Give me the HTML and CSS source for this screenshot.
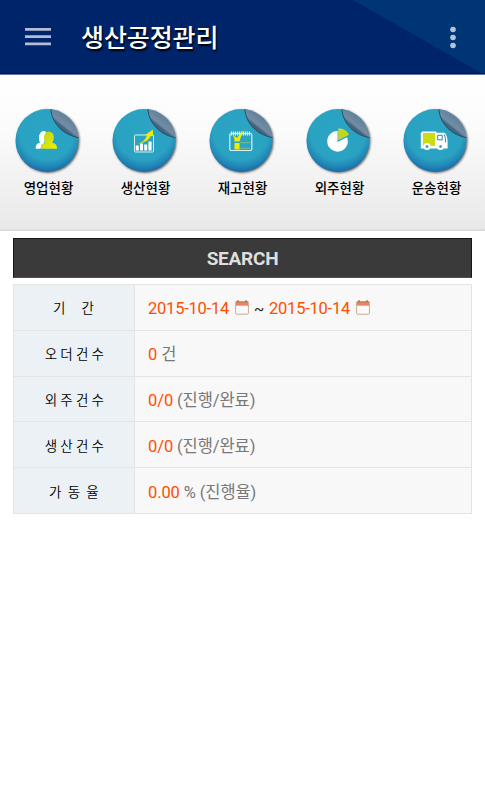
FILE: index.html
```html
<!DOCTYPE html>
<html lang="ko">
<head>
<meta charset="utf-8">
<title>생산공정관리</title>
<link rel="stylesheet" href="styles.css">
</head>
<body>
<svg class="defs" aria-hidden="true">
  <defs>
    <radialGradient id="disc" gradientUnits="userSpaceOnUse" cx="47" cy="29" r="42">
      <stop offset="0" stop-color="#2ba5c3"/><stop offset=".66" stop-color="#2aa2c2"/><stop offset=".82" stop-color="#2288b7"/><stop offset="1" stop-color="#1260a2"/>
    </radialGradient>
    <linearGradient id="fold" gradientUnits="userSpaceOnUse" x1="56" y1="32" x2="72" y2="12">
      <stop offset="0" stop-color="#34566f"/><stop offset=".4" stop-color="#42657f"/><stop offset=".5" stop-color="#748da4"/><stop offset="1" stop-color="#577a96"/>
    </linearGradient>
    <linearGradient id="lime" x1="0" y1="0" x2="1" y2="1"><stop offset="0" stop-color="#b9d51b"/><stop offset="1" stop-color="#f0f000"/></linearGradient>
    <symbol id="button" viewBox="0 0 97 75">
      <circle cx="47" cy="37.500" r="31.500" fill="url(#disc)"/>
      <path d="M50.700 6.200A31.500 31.500 0 0 1 78.500 34.700C64 32 52.500 22 50.700 6.200Z" fill="url(#fold)"/>
      <path d="M50.700 6.200C52.500 22 64 32 78.500 34.700" fill="none" stroke="#27506c" stroke-width="1"/>
    </symbol>
  </defs>
</svg>
<header class="bar">
  <svg class="menu" viewBox="0 0 26 18"><path d="M0 1.400h26M0 8.600h26M0 15.800h26"/></svg>
  <h1>생산공정관리</h1>
  <svg class="more" viewBox="0 0 6 24"><circle cx="3" cy="3.500" r="2.800"/><circle cx="3" cy="11.500" r="2.800"/><circle cx="3" cy="19.500" r="2.800"/></svg>
</header>
<nav class="tabs">
  <a class="tab"><svg class="icon" viewBox="0 0 97 75"><use href="#button" class="disc"/>
    <path fill="#fff" d="M35.700 45.800c0-4.300 1.600-5.400 4.500-6.300-1.400-2-1.800-6.500 0-9.300 1.500-2.500 4.400-2.600 6-1.200l-2 11-2.800 2-.8 3.800z"/>
    <path fill="url(#lime)" d="M41 45.800c.1-4.100 1.300-5.100 4.600-6.300-2.700-2.800-2.500-10.700 3.300-10.700s6 7.800 3.200 10.700c3.500 1.200 4.800 2.200 5 6.300z"/></svg>
    <span>영업현황</span></a>
  <a class="tab"><svg class="icon" viewBox="0 0 97 75"><use href="#button" class="disc"/>
    <rect x="37.500" y="32" width="19" height="17" rx="1" fill="none" stroke="#d8eef5" stroke-width="1"/>
    <path fill="#fff" d="M38.800 42.500h3v5h-3zM43 40.400h3v7.100h-3zM47.200 41.500h3v6h-3zM51.400 38.500h3.200v9h-3.200z"/>
    <path fill="#f0eb00" d="M41.300 40.500c4.500-1.200 7.500-4 8.700-8.300h-2.200l8-5.700.4 6.600-2.400-.2c-2 4.100-6 6.600-12.500 7.600z"/></svg>
    <span>생산현황</span></a>
  <a class="tab"><svg class="icon" viewBox="0 0 97 75"><use href="#button" class="disc"/>
    <rect x="35.800" y="30.500" width="22" height="17" rx="1.200" fill="none" stroke="#d9f0f6" stroke-width="1.200"/>
    <path stroke="#e5f5f8" stroke-width="1.200" d="M37.500 28.500v4M39.500 28.500v4M41.500 28.500v4M43.500 28.500v4M45.500 28.500v4M47.500 28.500v4M49.500 28.500v4M51.500 28.500v4M53.500 28.500v4M55.500 28.500v4"/>
    <path fill="none" stroke="#87bf75" d="M46 39.700h10M46 45.300h10"/>
    <path fill="#eeec00" d="M40.500 40h5.100v6.500h-5.100zM38.500 31.500l4.500 3.400c2.500-3.500 4.500-5.800 7.700-8-2.300 3.300-4 6.300-5.100 11.600h-5.100c0-2.600-.5-4.800-2-7z"/></svg>
    <span>재고현황</span></a>
  <a class="tab"><svg class="icon" viewBox="0 0 97 75"><use href="#button" class="disc"/>
    <path fill="#fff" d="M46.600 28A10.300 10.300 0 1 0 56 34.300L46.600 39z"/>
    <path fill="#c4d716" stroke="#e5e942" stroke-width=".6" d="M47.700 25.800v10.800l9.800-5.100c-2-3.700-5.800-5.700-9.800-5.700z"/></svg>
    <span>외주현황</span></a>
  <a class="tab"><svg class="icon" viewBox="0 0 97 75"><use href="#button" class="disc"/>
    <path fill="#fff" d="M34.300 28.500h14v1.300h8.300c2 2.300 3 5.300 3 8.500v7.200H32.800V30z"/>
    <path fill="#cbdc13" d="M35 30h12v13H35z"/>
    <path fill="none" stroke="#2688aa" d="M49.700 32.300h4.500v4.500h-4.500zM56 31.500c1.300 2.500 1.700 5 1.700 8"/>
    <circle cx="39" cy="43.500" r="3.600" fill="#fff"/><circle cx="52.500" cy="43.500" r="3.600" fill="#fff"/><circle cx="39" cy="43.500" r="1.300" fill="#258eaf"/><circle cx="52.500" cy="43.500" r="1.300" fill="#258eaf"/></svg>
    <span>운송현황</span></a>
</nav>
<main>
  <div class="search">SEARCH</div>
  <table>
    <tr class="dates"><th>기<i></i>간</th><td><b class="date">2015-10-14</b><svg class="cal" viewBox="0 0 14 15"><rect x=".6" y="1.600" width="12.800" height="12.600" rx="1" fill="#fafafa" stroke="#c9ac8b"/><path fill="#ef8063" d="M1 2h12v3.700H1z"/><path stroke="#b98452" d="M.6 2h12.800"/><path stroke="#8d5a43" d="M3 0v2M11 0v2"/></svg><span class="tilde">~</span><b class="date">2015-10-14</b><svg class="cal" viewBox="0 0 14 15"><rect x=".6" y="1.600" width="12.800" height="12.600" rx="1" fill="#fafafa" stroke="#c9ac8b"/><path fill="#ef8063" d="M1 2h12v3.700H1z"/><path stroke="#b98452" d="M.6 2h12.800"/><path stroke="#8d5a43" d="M3 0v2M11 0v2"/></svg></td></tr>
    <tr><th>오더건수</th><td class="orders"><b>0</b> 건</td></tr>
    <tr><th>외주건수</th><td><b>0/0</b> (진행/완료)</td></tr>
    <tr><th>생산건수</th><td><b>0/0</b> (진행/완료)</td></tr>
    <tr><th class="rate">가동율</th><td><b>0.00</b> % (진행율)</td></tr>
  </table>
</main>
</body>
</html>
```
FILE: styles.css
```css
* { box-sizing: border-box; }
body {
  margin: 0;
  background: #fff;
  font-family: Roboto, "Noto Sans CJK KR", sans-serif;
}
.defs { position: absolute; width: 0; height: 0; }
.bar {
  height: 75px;
  display: flex;
  align-items: center;
  padding: 0 29.5px 0 25px;
  background: linear-gradient(to bottom, transparent 73px, #001650 73px, #001650 74px, #6078a8 74px),
    linear-gradient(to top right, #002469 49.8%, #003575 50.2%) right top / 132px 75px no-repeat,
    #002469;
}
.menu { width: 26px; height: 18px; margin-top: -1px; stroke: #b3bdd6; stroke-width: 2.7; }
.bar h1 {
  margin: 0 auto 0 30px;
  padding-top: 2px;
  font-size: 25px;
  line-height: 36px;
  font-weight: 500;
  letter-spacing: -.1px;
  color: #fff;
  text-shadow: 1px 2px 2px #000;
}
.more { width: 6px; height: 24px; fill: #b3c3da; }
.tabs {
  height: 156px;
  display: grid;
  grid-template-columns: repeat(5, 1fr);
  padding-top: 28px;
  background: linear-gradient(#fff 0, #fbfbfb 35%, #e9e9e9 98%, #d8d8d8 100%);
}
.tab { display: flex; flex-direction: column; align-items: center; }
.icon { width: 97px; height: 75px; overflow: visible; }
.disc { filter: drop-shadow(1px 1.5px 1px #0009); }
.tab span { font-size: 13.5px; line-height: 21px; font-weight: 500; color: #000; white-space: nowrap; }
main { padding: 7px 13px 0; }
.search {
  height: 40px;
  border: 1px solid #161616;
  border-bottom-color: #505050;
  background: #3a3a3a;
  color: #dedede;
  font-size: 19px;
  line-height: 40px;
  font-weight: 700;
  letter-spacing: -.25px;
  text-align: center;
}
table {
  width: 459px;
  margin-top: 6px;
  border-collapse: collapse;
  table-layout: fixed;
}
tr { height: 45.8px; }
th, td { border: 1px solid #e3e5e5; padding: 0; }
th {
  width: 121px;
  padding-left: 4px;
  background: #ebf1f4;
  color: #000;
  font-size: 13.5px;
  font-weight: 350;
  letter-spacing: 3.2px;
}
th i { display: inline-block; width: 13px; }
.dates th { padding-left: 2px; }
th.rate { letter-spacing: 6.2px; padding-left: 6px; }
td { padding: 1px 0 0 13px; background: #f8f8f8; color: #777; font-size: 16.5px; letter-spacing: -.1px; white-space: nowrap; }
.dates td { padding-top: 3px; }
td.orders { padding-top: 0; }
td b { color: #ff4e00; font-weight: 400; }
.date { letter-spacing: -.23px; }
.cal { width: 14px; height: 15px; margin: 0 5px 0 6px; vertical-align: -1px; }
.tilde { display: inline-block; width: 10px; color: #222; font-size: 15px; margin-right: 5px; }
```
